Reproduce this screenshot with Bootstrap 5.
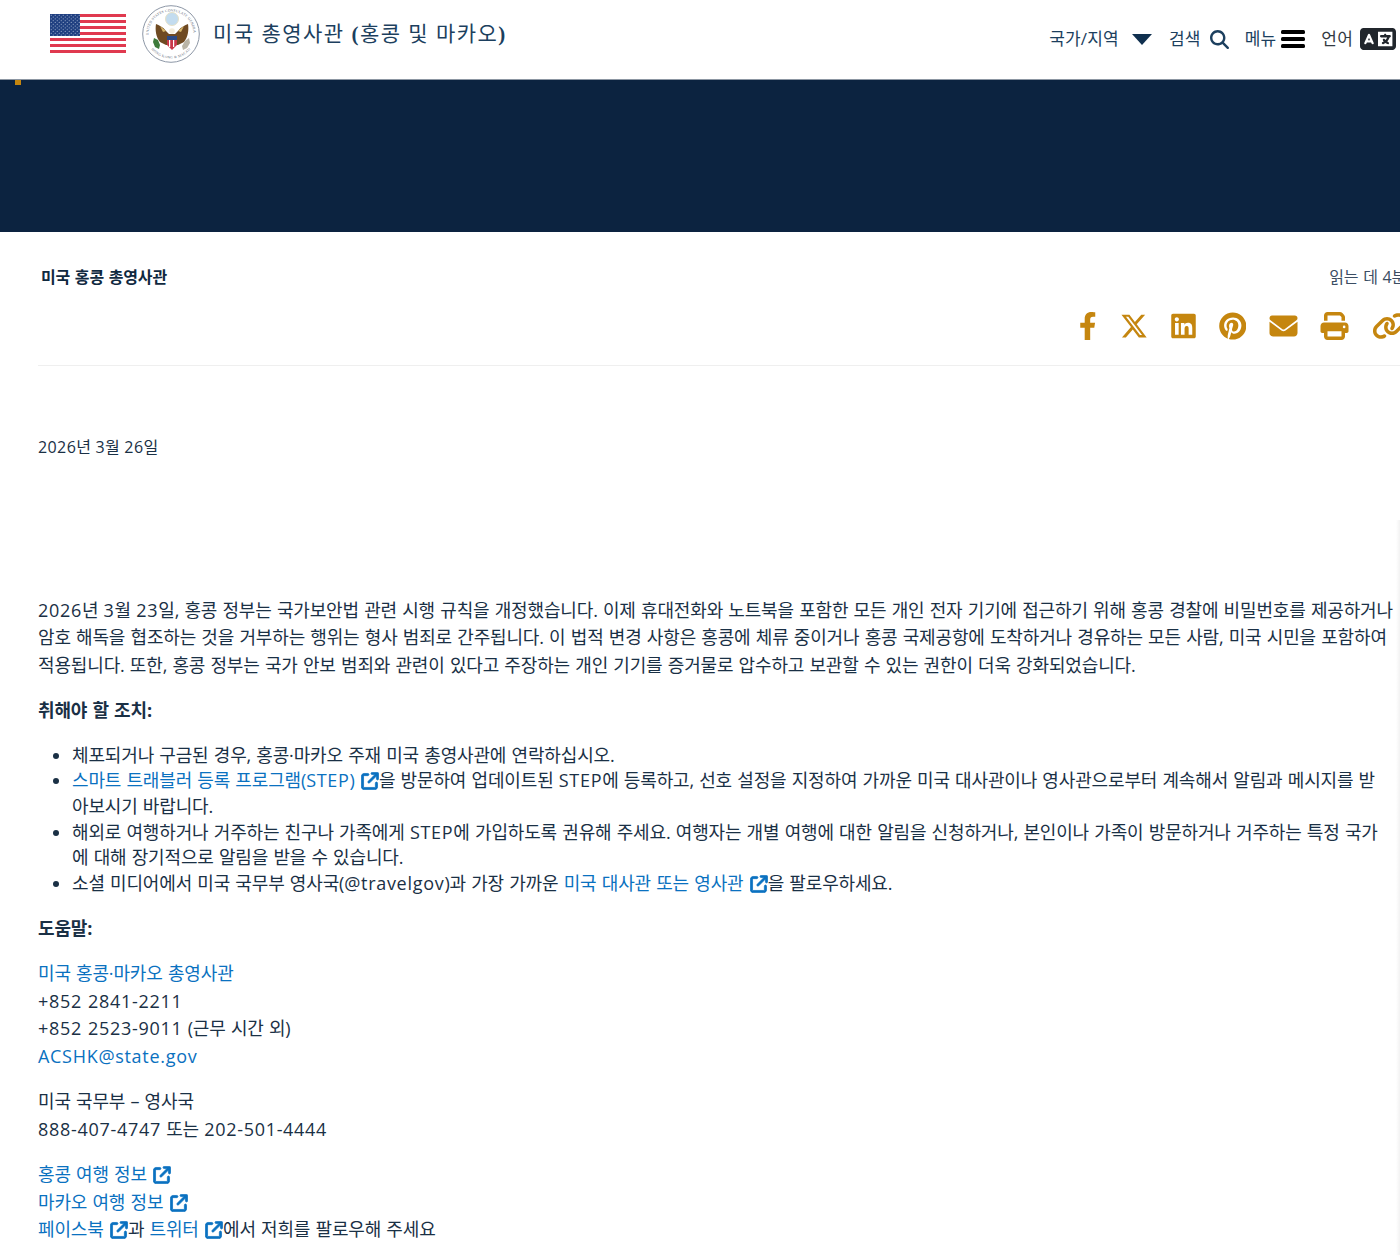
<!DOCTYPE html>
<html lang="ko">
<head>
  <meta charset="UTF-8">
  <title>미국 총영사관 (홍콩 및 마카오)</title>
  <link href="https://cdn.jsdelivr.net/npm/bootstrap@5.3.2/dist/css/bootstrap.min.css" rel="stylesheet">
  <style>
    html, body { overflow-x: hidden; }
    body {
      font-family: "Open Sans", "Noto Sans CJK KR", sans-serif;
      font-size: 18px;
      color: #1a3045;
      background: #fff;
      letter-spacing: -.15px;
      word-spacing: .7px;
    }
    a { color: #0a71c0; text-decoration: none; }
    /* latin runs sit wider than the hangul around them */
    .lat { letter-spacing: .7px; }

    /* header */
    .site-bar { height: 79px; padding: 5px 4px 0 50px; background: #fff; position: relative; }
    .site-flag { width: 76px; height: 39px; margin-top: 9px; }
    .site-seal { width: 58px; height: 58px; margin-left: 16px; }
    .site-title {
      font-family: "Liberation Serif", "Noto Sans CJK KR", serif;
      font-size: 21px;
      letter-spacing: 1.5px;
      word-spacing: 0;
      color: #1c3f5e;
      margin: 14px 0 0 13px;
      line-height: 30px;
      font-weight: 400;
    }
    .bar-nav { font-size: 17px; color: #1c3f5e; margin-top: 20px; height: 28px; line-height: 28px; letter-spacing: .2px; }
    .bar-nav .nav-dark { color: #333a42; }
    .nav-after-caret { margin-left: 17px; }
    .nav-caret { width: 20px; height: 11px; margin-left: 13px; fill: #10304f; }
    .nav-glass { width: 19px; height: 19px; margin-left: 9px; fill: #1c3f5e; }
    .nav-burger { width: 24px; height: 20px; margin-left: 5px; fill: #000; }
    .nav-lang { width: 36px; height: 22px; margin-left: 7px; fill: #21262c; }

    /* navy band */
    .hero-band { height: 153px; background: #0c2340; border-top: 1px solid #8c96a2; position: relative; }
    .hero-tick { position: absolute; left: 15px; top: 0; width: 6px; height: 5px; background: #c5860f; }

    /* article */
    .story-meta { width: 1440px; margin-left: 38px; height: 134px; border-bottom: 1px solid #efefef; }
    .story-time-wrap { padding: 34px 72px 0 3px; }
    .story-source { font-size: 16px; font-weight: 700; color: #10293f; line-height: 22px; white-space: nowrap; }
    .story-time { font-size: 16px; color: #3b4d63; line-height: 22px; white-space: nowrap; }
    .share-row { margin-top: 22px; margin-left: 1041px; height: 32px; }
    .share-row svg { fill: #c5860f; height: 28px; display: block; flex: none; }
    .story-date { font-size: 16px; margin: 70px 0 0 38px; line-height: 22px; }
    .story-date .lat { letter-spacing: .4px; }
    .story-body { margin: 138.5px 0 0 38px; width: 1358px; line-height: 27.5px; }
    .story-body p { margin-bottom: 18px; }
    .story-body ul { margin-bottom: 18px; padding: 0 8px 0 34px; line-height: 25.7px; }
    .ext-icon { width: 18px; height: 18px; fill: #0a71c0; stroke: #0a71c0; stroke-width: 22; vertical-align: -3px; margin-left: 1px; }
    .edge-shade {
      position: absolute; right: 0; top: 520px; width: 4px; height: 735px;
      background: linear-gradient(to right, rgba(0,0,0,0), rgba(0,0,0,.05));
    }
  </style>
</head>
<body>

<!-- Header -->
<header class="site-bar d-flex justify-content-between">
  <div class="d-flex align-items-start">
    <svg class="site-flag" viewBox="0 0 76 39" role="img" aria-label="US flag">
      <rect width="76" height="39" fill="#fff"/>
      <g fill="#e0394f">
        <rect y="0" width="76" height="3"/><rect y="6" width="76" height="3"/>
        <rect y="12" width="76" height="3"/><rect y="18" width="76" height="3"/>
        <rect y="24" width="76" height="3"/><rect y="30" width="76" height="3"/>
        <rect y="36" width="76" height="3"/>
      </g>
      <rect width="30" height="22" fill="#1f3f80"/>
      <pattern id="stars" width="4" height="3.6" patternUnits="userSpaceOnUse">
        <circle cx="1.2" cy="1.2" r=".5" fill="#c7d2e6"/>
        <circle cx="3.2" cy="3" r=".5" fill="#c7d2e6"/>
      </pattern>
      <rect width="30" height="22" fill="url(#stars)"/>
    </svg>
    <svg class="site-seal" viewBox="0 0 58 58" role="img" aria-label="Consulate seal">
      <circle cx="29" cy="29" r="28.3" fill="#fff" stroke="#8d97a6" stroke-width="1"/>
      <defs>
        <path id="sealTop" d="M6.500 29a22.500 22.500 0 0 1 45 0"/>
        <path id="sealBot" d="M4 33a25.500 25.500 0 0 0 50 0"/>
      </defs>
      <text font-family="Liberation Serif, serif" font-size="3.6" fill="#5d6878" letter-spacing=".2" word-spacing="0">
        <textPath href="#sealTop" startOffset="50%" text-anchor="middle">UNITED STATES CONSULATE GENERAL</textPath>
      </text>
      <text font-family="Liberation Serif, serif" font-size="3.6" fill="#5d6878" letter-spacing=".3" word-spacing="0">
        <textPath href="#sealBot" startOffset="50%" text-anchor="middle">HONG KONG &amp; MACAU</textPath>
      </text>
      <circle cx="30" cy="14" r="6.500" fill="#c3dcef" stroke="#e5e1c8" stroke-width="1"/>
      <path d="M14 19c3 1 7 3 10 7l3 3h6l3-3c3-4 7-6 10-7 1 6 0 13-4 18l-6 3H24l-6-3c-4-5-5-12-4-18z" fill="#6f4a22"/>
      <path d="M18 21l6 5-3 1zM42 21l-6 5 3 1z" fill="#d7b66a"/>
      <circle cx="30" cy="26" r="2.800" fill="#f3ecd9"/>
      <path d="M25 32h10v8l-5 5-5-5z" fill="#c9384a"/>
      <path d="M27 35h1.200v7H27zM31 35h1.200v7H31z" fill="#fff"/>
      <rect x="25" y="31" width="10" height="4" fill="#2c4a86"/>
      <path d="M12 33l4 2 2 5-1 4-4-2-2-5z" fill="#3d7a3a"/>
      <path d="M47 33l-4 3-3 5 1 4 4-2 3-5z" fill="#b9b4a6"/>
    </svg>
    <div class="site-title">미국 총영사관 <b>(</b>홍콩 및 마카오<b>)</b></div>
  </div>
  <nav class="bar-nav d-flex align-items-center align-self-start">
    <span>국가/지역</span>
    <svg class="nav-caret" viewBox="0 0 20 11"><path d="M0 0h20L10 11z"/></svg>
    <span class="nav-after-caret">검색</span>
    <svg class="nav-glass" viewBox="0 0 512 512"><path d="M416 208c0 45.900-14.900 88.300-40 122.700L502.600 457.400c12.500 12.500 12.500 32.800 0 45.300s-32.800 12.500-45.300 0L330.700 376c-34.400 25.200-76.800 40-122.700 40C93.100 416 0 322.900 0 208S93.100 0 208 0S416 93.100 416 208zM208 352a144 144 0 1 0 0-288 144 144 0 1 0 0 288z"/></svg>
    <span class="ms-3">메뉴</span>
    <svg class="nav-burger" viewBox="0 0 24 20"><rect y="1" width="24" height="4" rx="1.500"/><rect y="8" width="24" height="4" rx="1.500"/><rect y="15" width="24" height="4" rx="1.500"/></svg>
    <span class="nav-dark ms-3">언어</span>
    <svg class="nav-lang" viewBox="0 64 640 384" preserveAspectRatio="none"><path d="M0 128C0 92.700 28.700 64 64 64H256h48 16H576c35.300 0 64 28.700 64 64V384c0 35.300-28.700 64-64 64H320 304 256 64c-35.300 0-64-28.700-64-64V128zm320 0V384H576V128H320zM178.300 175.900c-3.200-7.200-10.400-11.900-18.300-11.900s-15.100 4.700-18.300 11.900l-64 144c-4.500 10.100 .1 21.900 10.200 26.400s21.900-.1 26.400-10.200l8.900-20.100h73.600l8.900 20.100c4.500 10.100 16.300 14.600 26.400 10.200s14.600-16.300 10.200-26.400l-64-144zM160 233.200L179 276H141l19-42.800zM448 164c11 0 20 9 20 20v4h44 16c11 0 20 9 20 20s-9 20-20 20h-2l-1.600 4.500c-8.900 24.400-22.400 46.600-39.600 65.400c.9 .6 1.800 1.100 2.700 1.600l18.900 11.300c9.500 5.700 12.500 18 6.900 27.400s-18 12.500-27.400 6.900l-18.900-11.300c-4.500-2.700-8.800-5.500-13.100-8.500c-10.600 7.500-21.900 14-34 19.400l-3.600 1.600c-10.100 4.500-21.900-.1-26.400-10.200s.1-21.900 10.200-26.400l3.600-1.600c6.400-2.900 12.600-6.100 18.500-9.800l-12.200-12.200c-7.800-7.800-7.800-20.500 0-28.300s20.500-7.800 28.300 0l14.600 14.600 .5 .5c12.400-13.100 22.500-28.300 29.800-45H448 376c-11 0-20-9-20-20s9-20 20-20h52v-4c0-11 9-20 20-20z"/></svg>
  </nav>
</header>

<!-- Navy band -->
<div class="hero-band"><span class="hero-tick"></span></div>

<main>
  <section class="story-meta">
    <div class="story-time-wrap d-flex justify-content-between">
      <span class="story-source">미국 홍콩 총영사관</span>
      <span class="story-time">읽는 데 4분</span>
    </div>
    <div class="share-row d-flex align-items-center">
      <svg viewBox="0 0 320 512" style="width:17.500px"><path d="M279.140 288l14.220-92.660h-88.910v-60.130c0-25.350 12.420-50.060 52.240-50.060h40.420V6.260S260.430 0 225.360 0c-73.220 0-121.080 44.380-121.080 124.720v70.620H22.890V288h81.390v224h100.170V288z"/></svg>
      <svg viewBox="0 0 512 512" style="width:28px;margin-left:23px"><path d="M389.200 48h70.600L305.600 224.200 487 464H345L233.700 318.600 106.500 464H35.800L200.700 275.500 26.800 48H172.400L272.900 180.900 389.200 48zM364.400 421.800h39.100L151.100 88h-42L364.400 421.800z"/></svg>
      <svg viewBox="0 0 448 512" style="width:25px;margin-left:23px"><path d="M416 32H31.900C14.300 32 0 46.500 0 64.300v383.400C0 465.500 14.300 480 31.900 480H416c17.600 0 32-14.500 32-32.300V64.300c0-17.800-14.400-32.300-32-32.300zM135.400 416H69V202.200h66.500V416zm-33.200-243c-21.300 0-38.500-17.300-38.500-38.500S80.900 96 102.200 96c21.200 0 38.500 17.300 38.500 38.500 0 21.300-17.200 38.500-38.500 38.500zm282.100 243h-66.400V312c0-24.800-.5-56.700-34.500-56.700-34.600 0-39.900 27-39.900 54.900V416h-66.400V202.200h63.700v29.200h.9c8.900-16.800 30.600-34.500 62.900-34.500 67.200 0 79.700 44.300 79.700 101.900V416z"/></svg>
      <svg viewBox="0 0 496 512" style="width:27.500px;margin-left:23px"><path d="M496 256c0 137-111 248-248 248-25.600 0-50.200-3.900-73.400-11.100 10.100-16.500 25.200-43.500 30.800-65 3-11.600 15.400-59 15.400-59 8.100 15.400 31.700 28.500 56.800 28.500 74.800 0 128.700-68.800 128.700-154.300 0-81.900-66.900-143.200-152.900-143.200-107 0-163.900 71.800-163.900 150.100 0 36.400 19.400 81.700 50.300 96.100 4.700 2.200 7.200 1.200 8.300-3.300.8-3.400 5-20.300 6.900-28.100.6-2.500.3-4.700-1.700-7.100-10.100-12.500-18.300-35.300-18.300-56.600 0-54.700 41.400-107.600 112-107.600 60.900 0 103.600 41.500 103.600 100.900 0 67.100-33.900 113.600-78 113.600-24.300 0-42.600-20.100-36.700-44.800 7-29.500 20.500-61.300 20.500-82.600 0-19-10.200-34.900-31.400-34.900-24.900 0-44.900 25.700-44.900 60.200 0 22 7.400 36.800 7.400 36.800s-24.500 103.800-29 123.200c-5 21.400-3 51.600-.9 71.200C65.400 450.900 0 361.100 0 256 0 119 111 8 248 8s248 111 248 248z"/></svg>
      <svg viewBox="0 0 512 512" style="width:29px;margin-left:23px"><path d="M48 64C21.500 64 0 85.500 0 112c0 15.100 7.100 29.300 19.200 38.400L236.800 313.600c11.400 8.500 27 8.500 38.400 0L492.800 150.400c12.100-9.100 19.200-23.300 19.200-38.400c0-26.500-21.500-48-48-48H48zM0 176V384c0 35.300 28.700 64 64 64H448c35.300 0 64-28.700 64-64V176L294.400 339.200c-22.800 17.100-54 17.100-76.800 0L0 176z"/></svg>
      <svg viewBox="0 0 512 512" style="width:29px;margin-left:22px"><path d="M128 0C92.700 0 64 28.700 64 64v96h64V64H354.700L384 93.300V160h64V93.300c0-17-6.700-33.300-18.700-45.300L400 18.700C388 6.700 371.700 0 354.700 0H128zM384 352v32 64H128V384 368 352H384zm64 32h32c17.700 0 32-14.300 32-32V256c0-35.300-28.700-64-64-64H64c-35.300 0-64 28.700-64 64v96c0 17.700 14.300 32 32 32H64v64c0 35.300 28.700 64 64 64H384c35.300 0 64-28.700 64-64V384zM432 248a24 24 0 1 1 0 48 24 24 0 1 1 0-48z"/></svg>
      <svg viewBox="0 0 640 512" style="width:35px;margin-left:23px"><path d="M579.800 267.700c56.500-56.500 56.500-148 0-204.500c-50-50-128.800-56.500-186.300-15.400l-1.600 1.100c-14.400 10.300-17.700 30.300-7.400 44.600s30.300 17.700 44.600 7.400l1.600-1.100c32.100-22.900 76-19.300 103.800 8.600c31.500 31.500 31.500 82.500 0 114L422.300 334.800c-31.500 31.500-82.500 31.500-114 0c-27.900-27.900-31.500-71.800-8.600-103.800l1.100-1.600c10.300-14.400 6.900-34.400-7.400-44.600s-34.400-6.900-44.600 7.400l-1.100 1.600C206.500 251.200 213 330 263 380c56.500 56.500 148 56.500 204.500 0L579.800 267.700zM60.200 244.300c-56.500 56.500-56.500 148 0 204.500c50 50 128.800 56.500 186.300 15.400l1.600-1.100c14.400-10.300 17.700-30.300 7.400-44.600s-30.300-17.700-44.600-7.400l-1.600 1.100c-32.100 22.900-76 19.300-103.800-8.600C74 372 74 321 105.500 289.500L217.700 177.200c31.500-31.500 82.500-31.500 114 0c27.900 27.900 31.500 71.800 8.600 103.900l-1.100 1.600c-10.300 14.400-6.900 34.400 7.400 44.600s34.400 6.900 44.600-7.400l1.100-1.600C433.500 260.800 427 182 377 132c-56.500-56.500-148-56.500-204.500 0L60.200 244.300z"/></svg>
    </div>
  </section>

  <p class="story-date mb-0"><span class="lat">2026</span>년 <span class="lat">3</span>월 <span class="lat">26</span>일</p>

  <article class="story-body">
    <p><span class="lat">2026</span>년 <span class="lat">3</span>월 <span class="lat">23</span>일, 홍콩 정부는 국가보안법 관련 시행 규칙을 개정했습니다. 이제 휴대전화와 노트북을 포함한 모든 개인 전자 기기에 접근하기 위해 홍콩 경찰에 비밀번호를 제공하거나 암호 해독을 협조하는 것을 거부하는 행위는 형사 범죄로 간주됩니다. 이 법적 변경 사항은 홍콩에 체류 중이거나 홍콩 국제공항에 도착하거나 경유하는 모든 사람, 미국 시민을 포함하여 적용됩니다. 또한, 홍콩 정부는 국가 안보 범죄와 관련이 있다고 주장하는 개인 기기를 증거물로 압수하고 보관할 수 있는 권한이 더욱 강화되었습니다.</p>
    <p><strong>취해야 할 조치:</strong></p>
    <ul>
      <li>체포되거나 구금된 경우, 홍콩·마카오 주재 미국 총영사관에 연락하십시오.</li>
      <li><a href="#">스마트 트래블러 등록 프로그램(<span class="lat">STEP</span>) <svg class="ext-icon" viewBox="0 0 512 512"><use href="#ext"/></svg></a>을 방문하여 업데이트된 <span class="lat">STEP</span>에 등록하고, 선호 설정을 지정하여 가까운 미국 대사관이나 영사관으로부터 계속해서 알림과 메시지를 받아보시기 바랍니다.</li>
      <li>해외로 여행하거나 거주하는 친구나 가족에게 <span class="lat">STEP</span>에 가입하도록 권유해 주세요. 여행자는 개별 여행에 대한 알림을 신청하거나, 본인이나 가족이 방문하거나 거주하는 특정 국가에 대해 장기적으로 알림을 받을 수 있습니다.</li>
      <li>소셜 미디어에서 미국 국무부 영사국(<span class="lat">@travelgov</span>)과 가장 가까운 <a href="#">미국 대사관 또는 영사관 <svg class="ext-icon" viewBox="0 0 512 512"><use href="#ext"/></svg></a>을 팔로우하세요.</li>
    </ul>
    <p><strong>도움말:</strong></p>
    <p><a href="#">미국 홍콩·마카오 총영사관</a><br><span class="lat">+852 2841-2211</span><br><span class="lat">+852 2523-9011</span> (근무 시간 외)<br><a href="#" class="lat">ACSHK@state.gov</a></p>
    <p>미국 국무부 – 영사국<br><span class="lat">888-407-4747</span> 또는 <span class="lat">202-501-4444</span></p>
    <p class="mb-0"><a href="#">홍콩 여행 정보 <svg class="ext-icon" viewBox="0 0 512 512"><use href="#ext"/></svg></a><br>
      <a href="#">마카오 여행 정보 <svg class="ext-icon" viewBox="0 0 512 512"><use href="#ext"/></svg></a><br>
      <a href="#">페이스북 <svg class="ext-icon" viewBox="0 0 512 512"><use href="#ext"/></svg></a>과 <a href="#">트위터 <svg class="ext-icon" viewBox="0 0 512 512"><use href="#ext"/></svg></a>에서 저희를 팔로우해 주세요</p>
  </article>
</main>

<div class="edge-shade"></div>

<svg width="0" height="0" class="position-absolute">
  <symbol id="ext" viewBox="-12 -12 536 536"><path d="M320 0c-17.700 0-32 14.300-32 32s14.300 32 32 32h82.700L201.400 265.400c-12.500 12.500-12.500 32.800 0 45.300s32.800 12.500 45.300 0L448 109.300V192c0 17.700 14.300 32 32 32s32-14.300 32-32V32c0-17.700-14.300-32-32-32H320zM80 32C35.800 32 0 67.800 0 112V432c0 44.200 35.800 80 80 80H400c44.200 0 80-35.800 80-80V320c0-17.700-14.300-32-32-32s-32 14.300-32 32V432c0 8.800-7.200 16-16 16H80c-8.800 0-16-7.200-16-16V112c0-8.800 7.200-16 16-16H192c17.700 0 32-14.300 32-32s-14.300-32-32-32H80z"/></symbol>
</svg>

<script src="https://cdn.jsdelivr.net/npm/bootstrap@5.3.2/dist/js/bootstrap.bundle.min.js"></script>
</body>
</html>
